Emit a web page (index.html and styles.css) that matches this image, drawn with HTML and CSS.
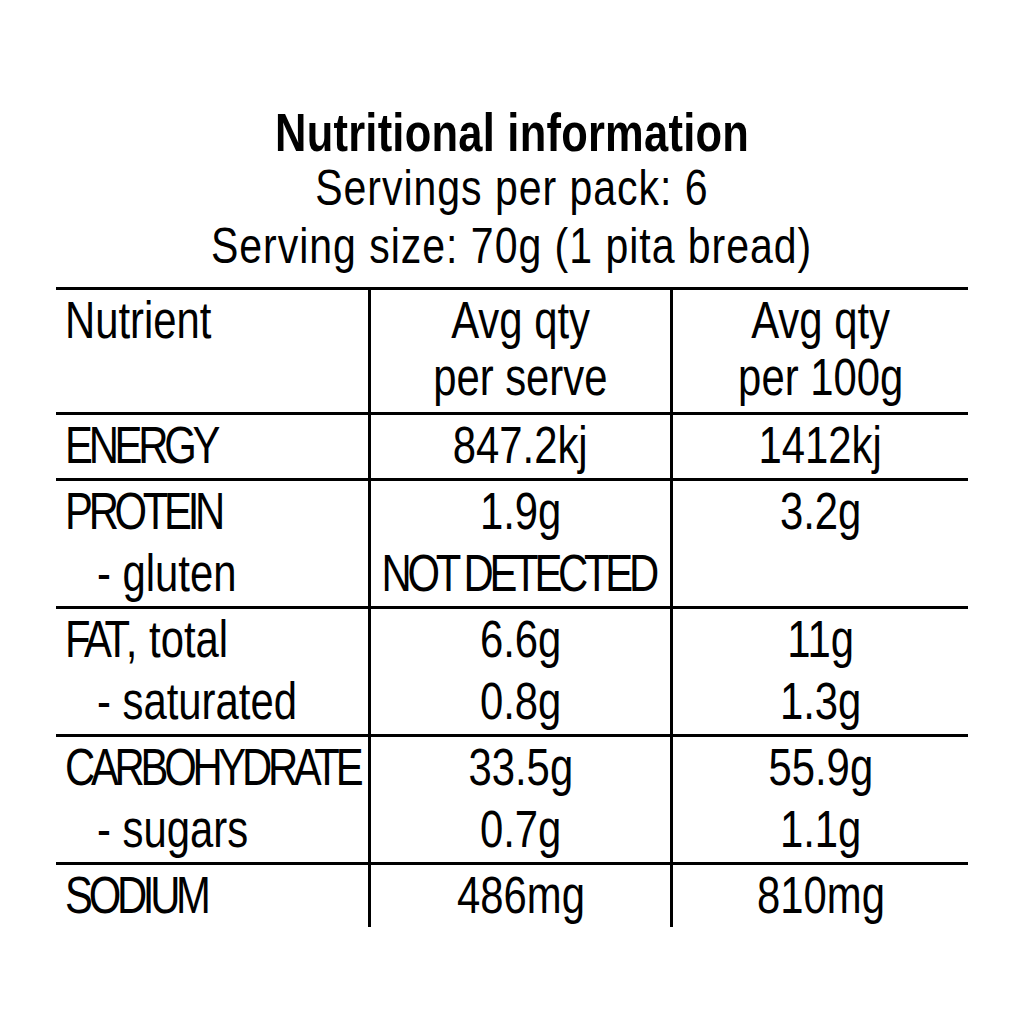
FILE: index.html
```html
<!DOCTYPE html>
<html lang="en">
<head>
<meta charset="utf-8">
<title>Nutritional information</title>
<link rel="stylesheet" href="styles.css">
</head>
<body>
<main class="label">
  <h1 class="title"><span class="t">Nutritional information</span></h1>
  <p class="sub"><span class="t">Servings per pack: 6</span></p>
  <p class="sub"><span class="t">Serving size: 70g (1 pita bread)</span></p>
  <div class="facts">
    <div class="row head">
      <div class="cell name"><span class="t">Nutrient</span></div>
      <div class="cell qty"><div class="line"><span class="t">Avg qty</span></div><div class="line"><span class="t">per serve</span></div></div>
      <div class="cell qty"><div class="line"><span class="t">Avg qty</span></div><div class="line"><span class="t">per 100g</span></div></div>
    </div>
    <div class="row">
      <div class="cell name"><span class="t caps">ENERGY</span></div>
      <div class="cell qty"><div class="line"><span class="t">847.2kj</span></div></div>
      <div class="cell qty"><div class="line"><span class="t">1412kj</span></div></div>
    </div>
    <div class="row">
      <div class="cell name"><div><span class="t caps">PROTEIN</span></div><div class="sub-item"><span class="t">- gluten</span></div></div>
      <div class="cell qty"><div class="line"><span class="t">1.9g</span></div><div class="line"><span class="t caps">NOT DETECTED</span></div></div>
      <div class="cell qty"><div class="line"><span class="t">3.2g</span></div></div>
    </div>
    <div class="row">
      <div class="cell name"><div><span class="t"><span class="caps">FAT</span>, total</span></div><div class="sub-item"><span class="t">- saturated</span></div></div>
      <div class="cell qty"><div class="line"><span class="t">6.6g</span></div><div class="line"><span class="t">0.8g</span></div></div>
      <div class="cell qty"><div class="line"><span class="t">11g</span></div><div class="line"><span class="t">1.3g</span></div></div>
    </div>
    <div class="row">
      <div class="cell name"><div><span class="t caps">CARBOHYDRATE</span></div><div class="sub-item"><span class="t">- sugars</span></div></div>
      <div class="cell qty"><div class="line"><span class="t">33.5g</span></div><div class="line"><span class="t">0.7g</span></div></div>
      <div class="cell qty"><div class="line"><span class="t">55.9g</span></div><div class="line"><span class="t">1.1g</span></div></div>
    </div>
    <div class="row last">
      <div class="cell name"><span class="t caps">SODIUM</span></div>
      <div class="cell qty"><div class="line"><span class="t">486mg</span></div></div>
      <div class="cell qty"><div class="line"><span class="t">810mg</span></div></div>
    </div>
  </div>
</main>
</body>
</html>
```

FILE: styles.css
```css
html, body {
  margin: 0;
  padding: 0;
  background: #ffffff;
}

body {
  font-family: "Liberation Sans", Arial, sans-serif;
  color: #000000;
}

/* condensed face: the sans is narrowed horizontally */
.t {
  display: inline-block;
  white-space: nowrap;
  transform: scaleX(0.82);
  transform-origin: center;
}

.label {
  padding-top: 106px;
  display: flex;
  flex-direction: column;
  align-items: center;
}

.title {
  margin: 0;
  font-size: 53px;
  line-height: 53px;
  font-weight: 700;
  text-align: center;
  letter-spacing: 0.3px;
}

.sub {
  margin: 0;
  font-size: 50px;
  line-height: 58px;
  letter-spacing: 1.2px;
  text-align: center;
}

.facts {
  width: 912px;
  margin-top: 12px;
  border-top: 3px solid #000;
  font-size: 51px;
}

.row {
  display: grid;
  grid-template-columns: 312px 302px 298px;
  border-bottom: 3px solid #000;
  line-height: 62.5px;
}

.row.last {
  border-bottom: none;
}

.row.head {
  line-height: 57px;
}

.row.head .cell {
  padding-top: 2px;
  padding-bottom: 6px;
}

.cell {
  white-space: nowrap;
  min-width: 0;
}

.cell.name {
  padding-left: 9px;
  text-align: left;
}

.cell.name .t {
  transform-origin: left center;
}

.cell.qty {
  border-left: 3px solid #000;
}

.cell.qty .line {
  display: flex;
  justify-content: center;
}

.sub-item {
  padding-left: 32px;
}

.caps {
  letter-spacing: -5.2px;
}

.cell.qty .caps {
  padding-right: 5.2px;
}
```
